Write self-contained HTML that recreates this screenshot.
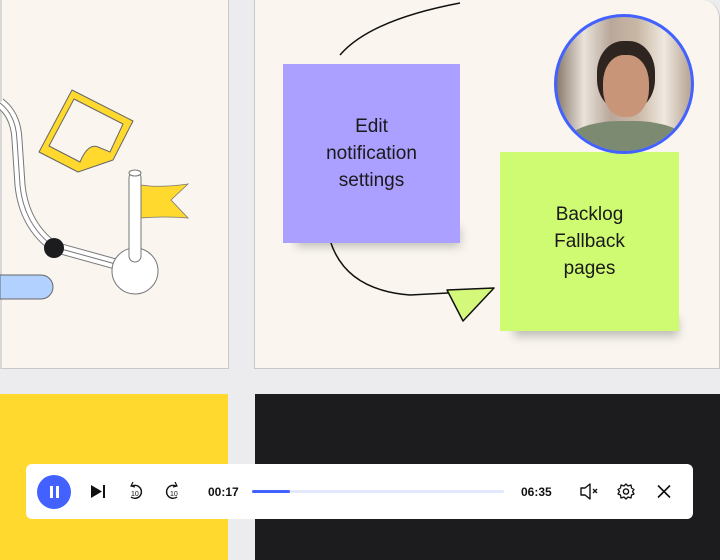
<!DOCTYPE html>
<html><head><style>
*{box-sizing:border-box}
body{margin:0;width:720px;height:560px;background:#ececee;position:relative;overflow:hidden;font-family:"Liberation Sans",sans-serif}
.p{position:absolute}
.note{position:absolute;display:flex;align-items:center;justify-content:center;text-align:center;font-size:19px;line-height:27px;color:#1a1a1a}
</style></head><body>
<div class="p" style="left:0;top:0;width:229px;height:369px;background:#faf6ef;border-right:1px solid #c8c8c8;border-bottom:1px solid #c8c8c8;border-left:2px solid #d8d8d8"></div>
<div class="p" style="left:254px;top:0;width:466px;height:369px;background:#faf6ef;border:1px solid #c8c8c8;border-top:none;border-top-right-radius:18px"></div>
<div class="p" style="left:0;top:394px;width:228px;height:166px;background:#ffd92e"></div>
<div class="p" style="left:255px;top:394px;width:465px;height:166px;background:#1c1c1e"></div>
<svg class="p" style="left:0;top:0" width="720" height="400">
<path d="M0 103 Q16 115 17 140 L20 185 Q24 225 54 247 L130 268" fill="none" stroke="#777" stroke-width="11"/>
<path d="M0 103 Q16 115 17 140 L20 185 Q24 225 54 247 L130 268" fill="none" stroke="#fff" stroke-width="9"/>
<path d="M0 103 Q16 115 17 140 L20 185 Q24 225 54 247 L130 268" fill="none" stroke="#777" stroke-width="1"/>
<circle cx="54" cy="248" r="10" fill="#1c1c1e"/>
<path d="M0 275 H41 a12 12 0 0 1 0 24 H0 Z" fill="#b3d1ff" stroke="#666" stroke-width="1"/>
<path d="M72 90 L133 121 L113 160 L78 172 L39 152 Z" fill="#ffd92e" stroke="#666" stroke-width="1" stroke-linejoin="round"/>
<path d="M74 99 L123 124 L110 152 L98 147 Q88 143 80 162 L49 146 Z" fill="#faf6ef" stroke="#666" stroke-width="1"/>
<circle cx="135" cy="271" r="23" fill="#fff" stroke="#777" stroke-width="1"/>
<path d="M141 185 Q160 188 188 184 L171 200 L188 218 Q165 216 141 218 Z" fill="#ffd92e" stroke="#777" stroke-width="0.8"/>
<rect x="129" y="172" width="12" height="90" rx="6" fill="#fff" stroke="#777" stroke-width="1"/>
<ellipse cx="135" cy="173" rx="6" ry="3" fill="#fff" stroke="#777"/>
<path d="M460 3 Q370 20 340 55" fill="none" stroke="#111" stroke-width="1.5"/>
<path d="M330 240 Q345 290 410 295 L448 293" fill="none" stroke="#111" stroke-width="1.5"/>
<path d="M447 290 L494 288 L463 321 Z" fill="#d4f97a" stroke="#111" stroke-width="1.5" stroke-linejoin="round"/>
</svg>
<div class="p" style="left:296px;top:228px;width:164px;height:18px;background:rgba(0,0,0,.25);filter:blur(5px)"></div>
<div class="note" style="left:283px;top:64px;width:177px;height:179px;background:#ab9fff">Edit<br>notification<br>settings</div>
<div class="p" style="left:514px;top:318px;width:164px;height:18px;background:rgba(0,0,0,.25);filter:blur(5px)"></div>
<div class="note" style="left:500px;top:152px;width:179px;height:179px;background:#cffb72">Backlog<br>Fallback<br>pages</div>
<div class="p" style="left:554px;top:14px;width:140px;height:140px;border-radius:50%;border:3px solid #4261ff;overflow:hidden;background:linear-gradient(90deg,#8a7a6c 0%,#e9e3db 20%,#b9a79a 40%,#c9b7a5 60%,#efe9e0 80%,#b7a393 100%)">
<div class="p" style="left:40px;top:24px;width:58px;height:70px;border-radius:45%;background:#2e2420"></div>
<div class="p" style="left:46px;top:38px;width:46px;height:62px;border-radius:45%;background:#c99578"></div>
<div class="p" style="left:8px;top:104px;width:124px;height:50px;border-radius:45% 45% 0 0;background:#7c8a72"></div>
</div>
<div class="p" style="left:26px;top:464px;width:667px;height:55px;background:#fff;border-radius:6px"></div>
<div class="p" style="left:37px;top:475px;width:34px;height:34px;border-radius:50%;background:#4261ff"></div>
<div class="p" style="left:50px;top:486px;width:3px;height:12px;background:#fff"></div>
<div class="p" style="left:56px;top:486px;width:3px;height:12px;background:#fff"></div>
<svg class="p" style="left:0;top:464px" width="720" height="55">
<path d="M91 21 L102 27.5 L91 34 Z" fill="#111"/><rect x="103" y="21" width="2" height="13" fill="#111"/>
<path d="M132 22 A6.5 6.5 0 1 1 131 33" fill="none" stroke="#111" stroke-width="1.4"/><path d="M133 18 L131 22 L135 23" fill="none" stroke="#111" stroke-width="1.2"/>
<text x="131" y="32" font-size="7" font-family="Liberation Sans" fill="#111">10</text>
<path d="M176 22 A6.5 6.5 0 1 0 177 33" fill="none" stroke="#111" stroke-width="1.4"/><path d="M175 18 L177 22 L173 23" fill="none" stroke="#111" stroke-width="1.2"/>
<text x="170" y="32" font-size="7" font-family="Liberation Sans" fill="#111">10</text>
<text x="208" y="32" font-size="12" font-weight="bold" font-family="Liberation Sans" fill="#111">00:17</text>
<rect x="252" y="26" width="252" height="3" rx="1.5" fill="#e4e8ff"/><rect x="252" y="26" width="38" height="3" rx="1.5" fill="#4261ff"/>
<text x="521" y="32" font-size="12" font-weight="bold" font-family="Liberation Sans" fill="#111">06:35</text>
<path d="M581 24 H585 L590 20 V35 L585 31 H581 Z" fill="none" stroke="#111" stroke-width="1.4" stroke-linejoin="round"/><path d="M593 25 L597 29 M597 25 L593 29" stroke="#111" stroke-width="1.3"/>
<circle cx="626" cy="27.5" r="2.6" fill="none" stroke="#111" stroke-width="1.4"/>
<path d="M626 20 L628 22 L631 21 L631.5 24 L634 25.5 L632.5 27.5 L634 30 L631.5 31 L631 34 L628 33 L626 35 L624 33 L621 34 L620.5 31 L618 30 L619.5 27.5 L618 25.5 L620.5 24 L621 21 L624 22 Z" fill="none" stroke="#111" stroke-width="1.3" stroke-linejoin="round"/>
<path d="M658 21.5 L670 33.5 M670 21.5 L658 33.5" stroke="#111" stroke-width="1.6"/>
</svg>
</body></html>
